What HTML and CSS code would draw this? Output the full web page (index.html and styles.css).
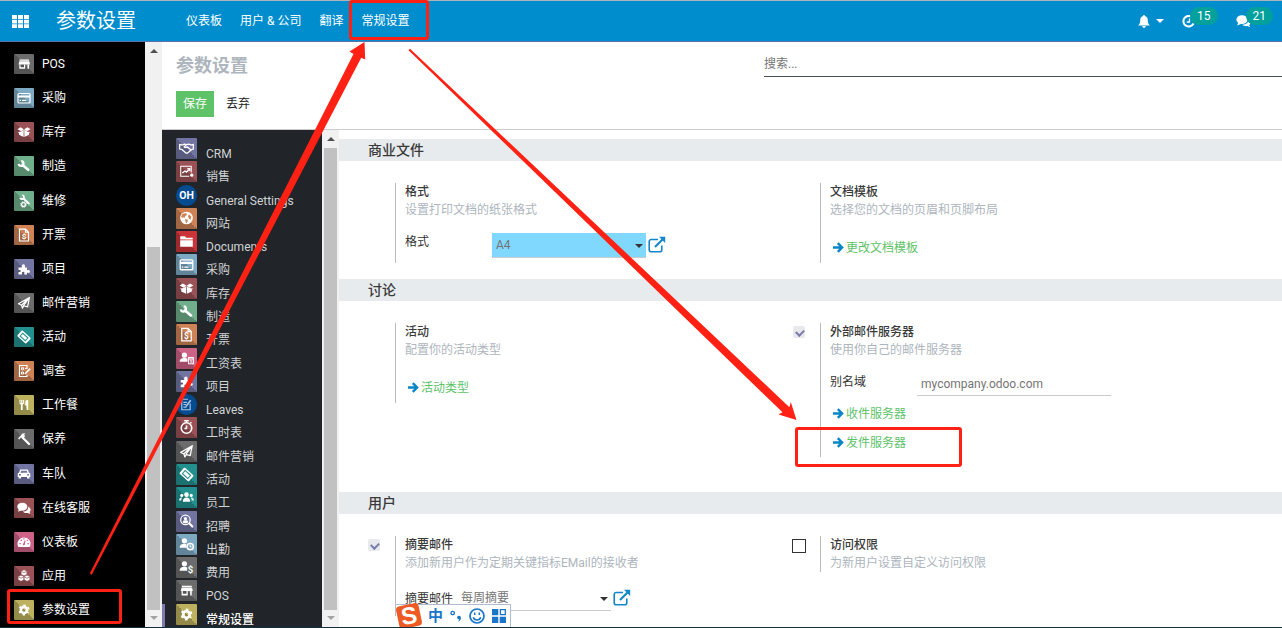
FILE: index.html
```html
<!DOCTYPE html>
<html lang="zh-CN">
<head>
<meta charset="utf-8">
<title>参数设置</title>
<link rel="stylesheet" href="styles.css">
</head>
<body>
<svg class="sprite" aria-hidden="true">
  <symbol id="i-pos" viewBox="0 0 20 20"><path fill="#fff" d="M5.500 5.500h9.500v1.200H5.500zM5.300 7.200h10l.7 3.300H4.500z"/><path fill="#fff" d="M5.300 10.500h1.200v2.700h3.500v-2.700h1.200V14.700H5.300zM13.500 10.500h1.500v4.200h-1.500z"/></symbol>
  <symbol id="i-card" viewBox="0 0 20 20"><rect x="4" y="5.500" width="12" height="9.500" rx="1" fill="none" stroke="#fff" stroke-width="1.200"/><path fill="#fff" d="M4 7.500h12v2H4zM5.500 11.800h1.500v1.200H5.500zM8 11.800h4v1.200H8z"/></symbol>
  <symbol id="i-box" viewBox="0 0 20 20"><path fill="#fff" d="M9.800 7.200 6.500 5.300 3.500 7.200 7.200 9.200zM10.200 7.200 13.500 5.300l3 1.900-3.700 2zM3.600 10.300l3.600-.8 2.500-1.700-.1 7.200L5 12.800V11zM16.400 10.300l-3.600-.8-2.500-1.700.1 7.200 4.600-2.200V11z"/></symbol>
  <symbol id="i-wrench" viewBox="0 0 20 20"><path fill="none" stroke="#fff" stroke-width="2.600" stroke-linecap="round" d="M8.500 9l5.700 4.800"/><path fill="none" stroke="#fff" stroke-width="2.200" d="M7.300 5.200a2.400 2.400 0 1 1-2.600 2.700"/></symbol>
  <symbol id="i-repair" viewBox="0 0 20 20"><path fill="none" stroke="#fff" stroke-width="2" stroke-linecap="round" d="M9.500 7.500l5.300 5"/><path fill="none" stroke="#fff" stroke-width="1.800" d="M8.300 4.200a2 2 0 1 1-2.200 2.600"/><circle cx="9.500" cy="13.500" r="1.900" fill="none" stroke="#fff" stroke-width="1.300"/><circle cx="9.500" cy="13.500" r="2.800" fill="none" stroke="#fff" stroke-dasharray="1.200 1"/></symbol>
  <symbol id="i-invoice" viewBox="0 0 20 20"><path fill="none" stroke="#fff" stroke-width="1.200" d="M5.500 4.200h6l3 3v8.800h-9zM11.500 4.200v3h3"/><text x="10" y="14" text-anchor="middle" class="glyph">$</text></symbol>
  <symbol id="i-puzzle" viewBox="0 0 20 20"><path fill="#fff" d="M4.500 8.500h3c.8 0 .3-1 .3-1.700a1.600 1.600 0 0 1 3.200 0c0 .8-.5 1.700.3 1.700H13v2.300c0 1 1 .3 1.800.3a1.500 1.500 0 0 1 0 2.900c-.8 0-1.800-.6-1.800.3v1.200h-2.600c-.6 0 .1-.9.100-1.400a1.300 1.300 0 0 0-2.600 0c0 .6.6 1.400 0 1.400H4.500v-2.200c0-.8.700-.2 1.200-.2a1.100 1.100 0 0 0 0-2.200c-.5 0-1.200.5-1.200-.2z"/></symbol>
  <symbol id="i-plane" viewBox="0 0 20 20"><path fill="none" stroke="#fff" stroke-width="1.200" stroke-linejoin="round" d="M15.500 4.500l-11 6.300 3 1.400zM15.500 4.500l-2 9.500-4-1.400zM7.500 12.200l1 3 1.200-2.400"/></symbol>
  <symbol id="i-ticket" viewBox="0 0 20 20"><g transform="rotate(42 10 10)"><rect x="4" y="6.200" width="12" height="7.600" rx="1" fill="#fff"/><rect x="6.500" y="8" width="7" height="4" fill="none" stroke="#248f8f" stroke-width="1"/></g></symbol>
  <symbol id="i-survey" viewBox="0 0 20 20"><path fill="none" stroke="#fff" stroke-width="1.200" d="M13 8V4.500H5.500V15.500H13v-2"/><path fill="none" stroke="#fff" d="M7.500 6.800h2v2h-2zM7.500 11h2v2h-2zM11 7.500h1.500"/><path stroke="#fff" stroke-width="1.500" d="M10.800 13l5.400-5.400"/></symbol>
  <symbol id="i-fork" viewBox="0 0 20 20"><path fill="#fff" d="M5.500 5h1v3h.7V5h1v3h.7V5h1v3.500L8.700 9.700V15H6.900V9.700L5.500 8.500zM11.500 5.800c1-1 2.700-.8 2.700-.8v10h-1.600V10.500h-1.300z"/></symbol>
  <symbol id="i-hammer" viewBox="0 0 20 20"><path stroke="#fff" stroke-width="2.200" stroke-linecap="round" d="M9 9l6 6"/><path fill="#fff" d="M4 9.500l4.500-5 3-.2-1.300 1.200L11 7.500 8.300 10 7 8.300 5.200 10.600z"/></symbol>
  <symbol id="i-car" viewBox="0 0 20 20"><path fill="#fff" fill-rule="evenodd" d="M6.200 5.500h7.600l1.200 3.200c1 .2 1.300.8 1.300 1.800v2.500h-1v1.500h-2.300V13H7v1.500H4.700V13h-1v-2.500c0-1 .3-1.600 1.300-1.800zM7.200 6.800l-.7 1.900h7l-.7-1.900zM5 10.100v1.300h1.800v-1.300zM13.200 10.100v1.300H15v-1.300z"/></symbol>
  <symbol id="i-chat" viewBox="0 0 20 20"><ellipse cx="8.300" cy="8.700" rx="5" ry="4" fill="#fff"/><path fill="#fff" d="M5 10.500l-1 3.300 4-1.800zM14 8.500c4 2 2.500 5 1.600 5.500l.7 2-2.500-1c-2 .3-4-.2-5-1.500 4 .2 6-2.500 5.200-5z"/></symbol>
  <symbol id="i-gauge" viewBox="0 0 20 20"><path fill="#fff" d="M4.300 15a6.500 6.500 0 1 1 11.400 0z"/><path fill="#ce6287" d="M5.300 11h1.400v1.200H5.300zM6.600 7.700H8v1.300H6.600zM9.300 6.300h1.300v1.300H9.300zM13.400 11h1.400v1.200h-1.400zM12.700 7.800h1.200V9h-1.200zM10.700 8.500l.9.200-.8 4-1 1.100-1-1.300z"/></symbol>
  <symbol id="i-cubes" viewBox="0 0 20 20"><g fill="#fff" stroke="#9b5257" stroke-width=".5"><path d="M10 3.800l2.800 1.400v3.200L10 9.800 7.200 8.400V5.200z"/><path d="M7 9.200l2.800 1.400v3.200L7 15.200l-2.800-1.400v-3.200zM13 9.200l2.800 1.400v3.200L13 15.200l-2.800-1.400v-3.200z"/></g><path fill="none" stroke="#9b5257" stroke-width=".7" d="M7.500 5.500L10 6.700l2.500-1.200M4.500 11L7 12.200 9.500 11M10.500 11l2.500 1.200 2.500-1.200"/></symbol>
  <symbol id="i-gear" viewBox="0 0 20 20"><circle cx="10" cy="10" r="3.100" fill="none" stroke="#fff" stroke-width="2.600"/><circle cx="10" cy="10" r="4.700" fill="none" stroke="#fff" stroke-width="1.800" stroke-dasharray="2.300 2.622" stroke-dashoffset="1.150" transform="rotate(30 10 10)"/></symbol>
  <symbol id="i-crm" viewBox="0 0 20 20"><path fill="none" stroke="#fff" stroke-width="1.200" stroke-linejoin="round" d="M3.500 6l2.500.7 2-.9 2 .4 2.400-.4 1.800.9 2.300-.7v4.500l-1.500.4-4 3.400-1.300.2-4-3.600-2.200-.4zM10 6.300L7.700 8.500c.8 1 2 .8 3-.1l3.800 3.200"/></symbol>
  <symbol id="i-sales" viewBox="0 0 20 20"><path fill="none" stroke="#fff" d="M14.500 11V5h-10v9.500h8"/><path fill="none" stroke="#fff" stroke-width="1.300" d="M6 11.500l2.500-2 1.500 1L13 7.500M10.800 7.300h2.400v2.300"/><circle cx="15" cy="13.500" r="1.500" fill="#fff"/></symbol>
  <symbol id="i-globe" viewBox="0 0 20 20"><circle cx="10" cy="9.500" r="6" fill="#fff"/><path fill="#cf8255" d="M6 5.800L9.500 4.800 10.500 6.500 8.500 8 8.300 9.500l-1.500-.7-1 .6-1-.9zM8.500 10.500l2.800.8-.3 1.700-1.300 1.700zM12.300 6l2.300 2-.8 3.200-1.400-1-.9-2.200z"/></symbol>
  <symbol id="i-folder" viewBox="0 0 20 20"><path fill="#fff" d="M4 5h4.500l1.300 1.500H16V8H4zM4 8.700h12V15H4z"/></symbol>
  <symbol id="i-payroll" viewBox="0 0 20 20"><circle cx="8" cy="6.800" r="2.500" fill="#fff"/><path fill="#fff" d="M3.500 13c0-3 2.500-3.500 4.500-3.500 1.500 0 2.500.5 3 1V13z"/><path fill="none" stroke="#fff" d="M12 9h4.500v6H12zM12 10.500h4.500M14.300 11.500v2.500"/></symbol>
  <symbol id="i-leaves" viewBox="0 0 20 20"><path fill="none" stroke="#a9c4e4" stroke-width="1.100" d="M13.500 9v6h-8V5h6M7 8h3.500M7 10h2.500M7 12.500h3"/><path stroke="#a9c4e4" stroke-width="1.600" d="M9.500 12l4.500-6"/></symbol>
  <symbol id="i-watch" viewBox="0 0 20 20"><circle cx="10" cy="10.500" r="5" fill="none" stroke="#fff" stroke-width="1.500"/><path stroke="#fff" stroke-width="1.500" fill="none" d="M7.800 3.500h4.400M10 3.500v2M13.700 6l1-1M10 8V11H8"/></symbol>
  <symbol id="i-people" viewBox="0 0 20 20"><g fill="#fff"><circle cx="10" cy="7.300" r="2.200"/><circle cx="5.500" cy="8" r="1.500"/><circle cx="14.500" cy="8" r="1.500"/><path d="M6.500 14c0-3 1.500-4 3.500-4s3.500 1 3.500 4zM3 12.800c0-2 1-2.800 3-2.800-.8 1-1 2-1 2.800zM17 12.800c0-2-1-2.800-3-2.800.8 1 1 2 1 2.800z"/></g></symbol>
  <symbol id="i-recruit" viewBox="0 0 20 20"><circle cx="9" cy="8.500" r="4.500" fill="none" stroke="#fff" stroke-width="1.200"/><circle cx="9" cy="7.300" r="1.500" fill="#fff"/><path fill="#fff" d="M6.300 11c0-2 1.300-2.200 2.700-2.200s2.700.2 2.700 2.200L9 12z"/><path stroke="#fff" stroke-width="2" stroke-linecap="round" d="M12.800 12l2.700 2.700"/></symbol>
  <symbol id="i-attend" viewBox="0 0 20 20"><circle cx="8" cy="6.500" r="2.500" fill="#fff"/><path fill="#fff" d="M3.500 13c0-3 2.500-3.700 4.500-3.700 1 0 1.600.2 2 .5V13z"/><circle cx="13.500" cy="12" r="3" fill="#7da9c3" stroke="#fff" stroke-width="1.400"/><path fill="none" stroke="#fff" d="M13.500 10.300V12.200h1.300"/></symbol>
  <symbol id="i-expense" viewBox="0 0 20 20"><circle cx="8" cy="6.500" r="2.500" fill="#fff"/><path fill="#fff" d="M3.500 13c0-3 2.500-3.700 4.500-3.700 1.400 0 2.300.4 2.700.9V13z"/><text x="13.800" y="15.500" text-anchor="middle" class="glyph glyph-lg">$</text></symbol>
  <symbol id="i-arrow" viewBox="0 0 11 11"><path fill="none" stroke="#0a86c8" stroke-width="2.400" d="M0 5.500h9M4.800 1.200l4.300 4.300-4.300 4.300"/></symbol>
  <symbol id="i-external" viewBox="0 0 18 18"><path fill="none" stroke="#1387c9" stroke-width="1.600" d="M10 3.500H3.200A2 2 0 0 0 1.200 5.500v8.300a2 2 0 0 0 2 2h8.600a2 2 0 0 0 2-2V9.500"/><path stroke="#1387c9" stroke-width="2.200" d="M7 11l7.500-7.500"/><path fill="#1387c9" d="M11 .8h6.200V7z"/></symbol>
</svg>

<header class="navbar">
  <button class="apps" aria-label="应用"><svg width="17" height="13" viewBox="0 0 17 13"><path fill="#fff" d="M0 0h5v4H0zM6 0h5v4H6zM12 0h5v4h-5zM0 4.700h5v3.700H0zM6 4.700h5v3.700H6zM12 4.700h5v3.700h-5zM0 9.200h5V13H0zM6 9.200h5V13H6zM12 9.200h5V13h-5z"/></svg></button>
  <a class="brand" href="#">参数设置</a>
  <nav class="menu">
    <a href="#">仪表板</a><a href="#">用户 &amp; 公司</a><a href="#">翻译</a><a href="#">常规设置</a>
  </nav>
  <div class="systray">
    <button class="tray bell" aria-label="通知"><svg width="12" height="13" viewBox="0 0 12 13"><path fill="#fff" d="M6 0c.7 0 .9.500.9 1C9.300 1.500 9.800 3.500 9.800 5.500c0 2.500.9 3.800 2 4.900H.2c1.100-1.100 2-2.400 2-4.900 0-2 .5-4 2.900-4.500 0-.5.200-1 .9-1zM4.300 11h3.400c0 1-.8 1.800-1.700 1.800S4.300 12 4.300 11z"/></svg><span class="caret"></span></button>
    <button class="tray" aria-label="活动"><svg width="13" height="13" viewBox="0 0 13 13"><path fill="none" stroke="#fff" stroke-width="2" d="M10.500 2.500a5.300 5.300 0 1 0 1 6"/><path fill="none" stroke="#fff" stroke-width="1.300" d="M7.500 3.500V7H4.800"/></svg><span class="badge">15</span></button>
    <button class="tray" aria-label="消息"><svg width="15" height="13" viewBox="0 0 15 13"><ellipse cx="6" cy="4.600" rx="5.600" ry="4.300" fill="#fff"/><path fill="#fff" d="M2.500 7.500L1 10.500l4-1.600zM12.200 5c2.800 1.800 2.300 4 1 5.200l1 2-2.800-1.100c-2 .2-4-.2-5-1.400 4 0 6.300-2.200 5.800-4.700z"/></svg><span class="badge">21</span></button>
  </div>
</header>

<div class="shell">
  <nav class="sidebar" aria-label="应用">
    <a href="#"><svg class="tile grey"><use href="#i-pos"/></svg>POS</a>
    <a href="#"><svg class="tile blue"><use href="#i-card"/></svg>采购</a>
    <a href="#"><svg class="tile red"><use href="#i-box"/></svg>库存</a>
    <a href="#"><svg class="tile green"><use href="#i-wrench"/></svg>制造</a>
    <a href="#"><svg class="tile green"><use href="#i-repair"/></svg>维修</a>
    <a href="#"><svg class="tile orange"><use href="#i-invoice"/></svg>开票</a>
    <a href="#"><svg class="tile purple"><use href="#i-puzzle"/></svg>项目</a>
    <a href="#"><svg class="tile grey"><use href="#i-plane"/></svg>邮件营销</a>
    <a href="#"><svg class="tile teal"><use href="#i-ticket"/></svg>活动</a>
    <a href="#"><svg class="tile orange"><use href="#i-survey"/></svg>调查</a>
    <a href="#"><svg class="tile yellow"><use href="#i-fork"/></svg>工作餐</a>
    <a href="#"><svg class="tile grey"><use href="#i-hammer"/></svg>保养</a>
    <a href="#"><svg class="tile purple"><use href="#i-car"/></svg>车队</a>
    <a href="#"><svg class="tile red"><use href="#i-chat"/></svg>在线客服</a>
    <a href="#"><svg class="tile pink"><use href="#i-gauge"/></svg>仪表板</a>
    <a href="#"><svg class="tile red"><use href="#i-cubes"/></svg>应用</a>
    <a href="#"><svg class="tile yellow"><use href="#i-gear"/></svg>参数设置</a>
  </nav>
  <div class="scrollbar outer" aria-hidden="true"><span class="up"></span><span class="thumb"></span><span class="down"></span></div>

  <main class="main">
    <div class="control">
      <div class="control-left">
        <h1>参数设置</h1>
        <div class="actions"><button class="btn save">保存</button><button class="btn">丢弃</button></div>
      </div>
      <input class="search" type="search" placeholder="搜索..." aria-label="搜索">
    </div>

    <div class="content">
      <nav class="tabs" aria-label="设置">
        <a href="#"><svg class="tile purple"><use href="#i-crm"/></svg><span>CRM</span></a>
        <a href="#"><svg class="tile red"><use href="#i-sales"/></svg><span>销售</span></a>
        <a href="#"><svg class="tile round" viewBox="0 0 20 20"><text x="10" y="13" text-anchor="middle" class="glyph glyph-logo">OH</text></svg><span>General Settings</span></a>
        <a href="#"><svg class="tile orange"><use href="#i-globe"/></svg><span>网站</span></a>
        <a href="#"><svg class="tile crimson"><use href="#i-folder"/></svg><span>Documents</span></a>
        <a href="#"><svg class="tile blue"><use href="#i-card"/></svg><span>采购</span></a>
        <a href="#"><svg class="tile red"><use href="#i-box"/></svg><span>库存</span></a>
        <a href="#"><svg class="tile green"><use href="#i-wrench"/></svg><span>制造</span></a>
        <a href="#"><svg class="tile orange"><use href="#i-invoice"/></svg><span>开票</span></a>
        <a href="#"><svg class="tile pink"><use href="#i-payroll"/></svg><span>工资表</span></a>
        <a href="#"><svg class="tile purple"><use href="#i-puzzle"/></svg><span>项目</span></a>
        <a href="#"><svg class="tile round"><use href="#i-leaves"/></svg><span>Leaves</span></a>
        <a href="#"><svg class="tile red"><use href="#i-watch"/></svg><span>工时表</span></a>
        <a href="#"><svg class="tile grey"><use href="#i-plane"/></svg><span>邮件营销</span></a>
        <a href="#"><svg class="tile teal"><use href="#i-ticket"/></svg><span>活动</span></a>
        <a href="#"><svg class="tile teal"><use href="#i-people"/></svg><span>员工</span></a>
        <a href="#"><svg class="tile purple"><use href="#i-recruit"/></svg><span>招聘</span></a>
        <a href="#"><svg class="tile blue"><use href="#i-attend"/></svg><span>出勤</span></a>
        <a href="#"><svg class="tile grey"><use href="#i-expense"/></svg><span>费用</span></a>
        <a href="#"><svg class="tile grey"><use href="#i-pos"/></svg><span>POS</span></a>
        <a href="#" class="active"><svg class="tile yellow"><use href="#i-gear"/></svg><span>常规设置</span></a>
      </nav>
      <div class="scrollbar inner" aria-hidden="true"><span class="up"></span><span class="thumb"></span><span class="down"></span></div>

      <div class="settings">
        <h2>商业文件</h2>
        <div class="group">
          <section class="setting">
            <div class="check"></div>
            <div class="body">
              <h3>格式</h3><p>设置打印文档的纸张格式</p>
              <div class="field"><label for="paper">格式</label><span class="picker filled"><select id="paper"><option>A4</option></select></span><button class="ext" aria-label="打开格式"><svg><use href="#i-external"/></svg></button></div>
            </div>
          </section>
          <section class="setting">
            <div class="check"></div>
            <div class="body">
              <h3>文档模板</h3><p>选择您的文档的页眉和页脚布局</p>
              <a class="go" href="#"><svg><use href="#i-arrow"/></svg>更改文档模板</a>
            </div>
          </section>
        </div>

        <h2>讨论</h2>
        <div class="group roomy">
          <section class="setting">
            <div class="check"></div>
            <div class="body">
              <h3>活动</h3><p>配置你的活动类型</p>
              <a class="go" href="#"><svg><use href="#i-arrow"/></svg>活动类型</a>
            </div>
          </section>
          <section class="setting">
            <div class="check"><input type="checkbox" id="mail" checked></div>
            <div class="body">
              <h3><label for="mail">外部邮件服务器</label></h3><p>使用你自己的邮件服务器</p>
              <div class="field alias"><label for="domain">别名域</label><input id="domain" type="text" value="mycompany.odoo.com"></div>
              <a class="go" href="#"><svg><use href="#i-arrow"/></svg>收件服务器</a>
              <a class="go" href="#"><svg><use href="#i-arrow"/></svg>发件服务器</a>
            </div>
          </section>
        </div>

        <h2>用户</h2>
        <div class="group last">
          <section class="setting">
            <div class="check"><input type="checkbox" id="digest" checked></div>
            <div class="body">
              <h3><label for="digest">摘要邮件</label></h3><p>添加新用户作为定期关键指标EMail的接收者</p>
              <div class="field digest"><label for="period">摘要邮件</label><span class="picker"><select id="period"><option>每周摘要</option></select></span><button class="ext" aria-label="打开摘要邮件"><svg><use href="#i-external"/></svg></button></div>
            </div>
          </section>
          <section class="setting short">
            <div class="check"><input class="plain" type="checkbox" id="access"></div>
            <div class="body">
              <h3><label for="access">访问权限</label></h3><p>为新用户设置自定义访问权限</p>
            </div>
          </section>
        </div>
      </div>
    </div>
  </main>
</div>

<div class="ime">
  <svg class="ime-logo" width="28" height="28" viewBox="0 0 28 28"><rect x="2.500" y="2.500" width="23" height="23" rx="4" fill="#ee5a24" transform="rotate(-12 14 14)"/><text x="14" y="22" text-anchor="middle" class="ime-s" transform="rotate(-8 14 14)">S</text></svg>
  <b>中</b>
  <svg width="12" height="12" viewBox="0 0 12 12"><circle cx="2.700" cy="3" r="1.700" fill="none" stroke="#1b76c9" stroke-width="1.300"/><path fill="#1b76c9" d="M7 7.500a2 2 0 1 1 4 .4c-.2 2-1.400 3.200-3 3.600.8-.8 1.200-1.400 1.200-2.200A2 2 0 0 1 7 7.500z"/></svg>
  <svg width="16" height="16" viewBox="0 0 16 16"><circle cx="8" cy="8" r="7" fill="none" stroke="#1b76c9" stroke-width="1.700"/><path fill="none" stroke="#1b76c9" stroke-width="1.500" d="M5.700 4.500v2.500M10.300 4.500v2.500M4.300 9.300c1 3.600 6.400 3.600 7.400 0"/></svg>
  <svg width="14" height="14" viewBox="0 0 14 14"><path fill="#1b76c9" d="M0 0h6.300v6.300H0zM0 7.700h6.300V14H0zM7.700 7.700H14V14H7.700z"/><path fill="none" stroke="#1b76c9" stroke-width="1.300" d="M8.400.7h4.900v4.900H8.400z"/></svg>
</div>

<svg class="marks" width="1282" height="628" viewBox="0 0 1282 628" aria-hidden="true">
  <g fill="none" stroke="#ff2113" stroke-width="3">
    <rect x="350.500" y="1.500" width="77" height="37" rx="1.500"/>
    <rect x="8.500" y="590.500" width="112" height="32" rx="1.500"/>
    <rect x="796.500" y="428.500" width="164" height="37" rx="1.500"/>
  </g>
  <g fill="#ff2113">
    <path d="M89.800 573.500L353.500 54l-4-2.500L364.500 42l.7 17.500-4-1.800L91.700 574.800z"/>
    <path d="M408.500 50.200L782.500 412.300l-4 2.200L796.500 420l-5.700-18-1.400 5.200L410 48.700z"/>
  </g>
</svg>
</body>
</html>
```
FILE: styles.css
```css
* { box-sizing: border-box; }
body {
  margin: 0;
  min-height: 100vh;
  display: flex;
  flex-direction: column;
  position: relative;
  overflow: hidden;
  border-bottom: 1px solid #12303c;
  background: #fff;
  color: #333;
  font: 12px/18px Roboto, "Noto Sans CJK SC", sans-serif;
}
a { color: inherit; text-decoration: none; }
button, input, select { font: inherit; color: inherit; }
button { border: 0; padding: 0; background: none; }
h1, h2, h3, p { margin: 0; }
.sprite { display: none; }
.glyph { fill: #fff; font: bold 8px Roboto, sans-serif; }
.glyph-lg { font-size: 9px; }
.glyph-logo { font-size: 10px; }

.navbar {
  display: flex;
  align-items: center;
  height: 42px;
  padding: 0 9px 0 12px;
  border-top: 1px solid #aab4ba;
  border-bottom: 1px solid #5f6fae;
  background: #008dcd;
  color: #fff;
}
.apps { display: flex; width: 44px; }
.brand { font-size: 20px; line-height: 40px; width: 130px; }
.menu { display: flex; gap: 18px; }
.systray { display: flex; align-items: center; margin-left: auto; gap: 18px; }
.tray { display: flex; align-items: center; height: 28px; }
.bell { gap: 6px; }
.caret { border: 4px solid transparent; border-top-color: #fff; border-bottom: 0; }
.badge {
  margin: 0 0 10px -5px;
  padding: 0 7px;
  border-radius: 9px;
  background: #00a09d;
  line-height: 18px;
}

.shell { flex: 1; display: flex; }
.sidebar {
  flex: none;
  width: 145px;
  display: flex;
  flex-direction: column;
  padding: 5px 0 0 14px;
  background: #000;
  color: #fff;
}
.sidebar a { flex: 1; display: flex; align-items: center; gap: 8px; }
.tile {
  flex: none;
  width: 20px;
  height: 20px;
  border-radius: 1px;
  background: linear-gradient(to bottom left, transparent 50%, rgba(0, 0, 0, .22) 50%) var(--tone);
}
.grey { --tone: #6c6c6c; }
.blue { --tone: #7da9c3; }
.red { --tone: #9b5257; }
.green { --tone: #6faf8b; }
.orange { --tone: #cf8255; }
.purple { --tone: #7274a2; }
.teal { --tone: #239090; }
.yellow { --tone: #bdb15f; }
.pink { --tone: #ce6287; }
.crimson { --tone: #cb3438; }
.tile.round { border-radius: 50%; background: #044b90; }

.scrollbar {
  flex: none;
  display: flex;
  flex-direction: column;
  align-items: center;
  width: 17px;
  padding: 7px 0;
  background: #f1f1f1;
}
.up, .down { border: 4px solid transparent; }
.up { border-top: 0; border-bottom-color: #505050; }
.down { border-bottom: 0; border-top-color: #a3a3a3; margin-top: 6px; }
.thumb { flex: 1; width: 13px; background: #c1c1c1; }
.outer .thumb { margin-top: 194px; }
.inner .thumb { margin-top: 7px; }

.main { flex: 1; min-width: 0; display: flex; flex-direction: column; }
.control {
  display: flex;
  justify-content: space-between;
  height: 88px;
  padding-left: 14px;
  border-bottom: 1px solid #ccc;
}
.control-left { padding-top: 11px; }
h1 { font-size: 18px; line-height: 26px; color: #adb5bd; }
.actions { display: flex; margin-top: 12px; }
.btn { height: 26px; width: 38px; color: #212529; }
.save { background: #5ec269; color: #fff; }
.btn + .btn { margin-left: 5px; }
.search {
  align-self: flex-start;
  width: 47%;
  max-width: 518px;
  margin-top: 9px;
  height: 26px;
  padding: 0;
  border: 0;
  border-bottom: 1px solid #495057;
  border-radius: 0;
  background: none;
  appearance: none;
  outline: 0;
}
.search::placeholder { color: #757575; }

.content { flex: 1; display: flex; }
.tabs {
  flex: none;
  width: 160px;
  display: flex;
  flex-direction: column;
  padding-top: 8px;
  background: #212529;
  color: #d0d2d4;
}
.tabs a {
  flex: 1;
  display: flex;
  gap: 9px;
  min-height: 0;
  padding-left: 11px;
  border-left: 3px solid transparent;
}
.tabs .tile { width: 21px; height: 21px; }
.tabs span { padding-top: 8px; height: 23px; line-height: 17px; }
.tabs .active { border-left-color: #7c7bad; color: #fff; font-weight: 500; }

.settings { flex: 1; min-width: 0; padding-top: 9px; }
h2 {
  padding-left: 29px;
  background: #e7ebee;
  font-size: 14px;
  font-weight: 500;
  line-height: 22px;
}
h2, h3 { color: #3a3a3a; }
.group {
  display: grid;
  grid-template-columns: 1fr 1fr;
  align-items: start;
  max-width: 866px;
  padding: 22px 0 16px 16px;
}
.roomy { padding-bottom: 35px; }
.last { padding-bottom: 0; }
.setting { display: flex; min-height: 80px; }
.short { min-height: 36px; }
.check { width: 40px; padding: 3px 0 0 13px; }
.check input {
  display: block;
  appearance: none;
  width: 12px;
  height: 12px;
  margin: 0;
  border-radius: 2px;
  background: #e7e9ed;
}
.check input:checked::after {
  content: "";
  display: block;
  width: 6px;
  height: 4px;
  margin: 3px;
  border: solid #7c7bad;
  border-width: 0 0 2px 2px;
  transform: rotate(-45deg);
}
.check .plain { width: 14px; height: 14px; margin-left: -1px; border: 1px solid #333; border-radius: 0; background: #fff; }
.body { border-left: 1px solid #bbb; padding-left: 9px; }
h3 { font-size: 12px; font-weight: 500; line-height: 18px; }
.body p { line-height: 18px; color: #adb5bd; margin-bottom: 14px; }
.short p { margin-bottom: 0; }
.field { display: flex; }
.field label { width: 87px; }
.picker { position: relative; width: 154px; height: 25px; }
.picker::after {
  content: "";
  position: absolute;
  right: 3px;
  top: 11px;
  border: 4px solid transparent;
  border-top-color: #333;
  border-bottom: 0;
}
.picker select {
  appearance: none;
  width: 100%;
  height: 100%;
  padding: 0 4px;
  border: 0;
  border-bottom: 1px solid #ccc;
  border-radius: 0;
  background: none;
  color: #757575;
}
.filled select { background: #80d8ff; }
.ext { margin: 3px 0 0 2px; height: 18px; }
.ext svg { display: block; width: 18px; height: 18px; }
.alias { height: 26px; }
.field input {
  width: 194px;
  height: 23px;
  padding: 0 4px;
  border: 0;
  border-bottom: 1px solid #ccc;
  color: #757575;
}
.digest label { width: 52px; padding-top: 4px; }
.go { display: flex; align-items: center; gap: 2px; height: 29px; padding-left: 3px; color: #5ec269; }
.go svg { width: 11px; height: 11px; }

.ime {
  position: absolute;
  left: 396px;
  bottom: 0;
  display: flex;
  align-items: center;
  gap: 7px;
  height: 23px;
  padding-right: 4px;
  border: solid #aebbd0;
  border-width: 1px 1px 0 0;
  background: #fff;
  color: #1b76c9;
}
.ime-logo { margin: 0 -2px 0 -1px; }
.ime b { font-size: 15px; }
.ime-s { fill: #fff; font: bold 24px "Liberation Sans", sans-serif; }
.marks { position: absolute; left: 0; top: 0; pointer-events: none; }
```
